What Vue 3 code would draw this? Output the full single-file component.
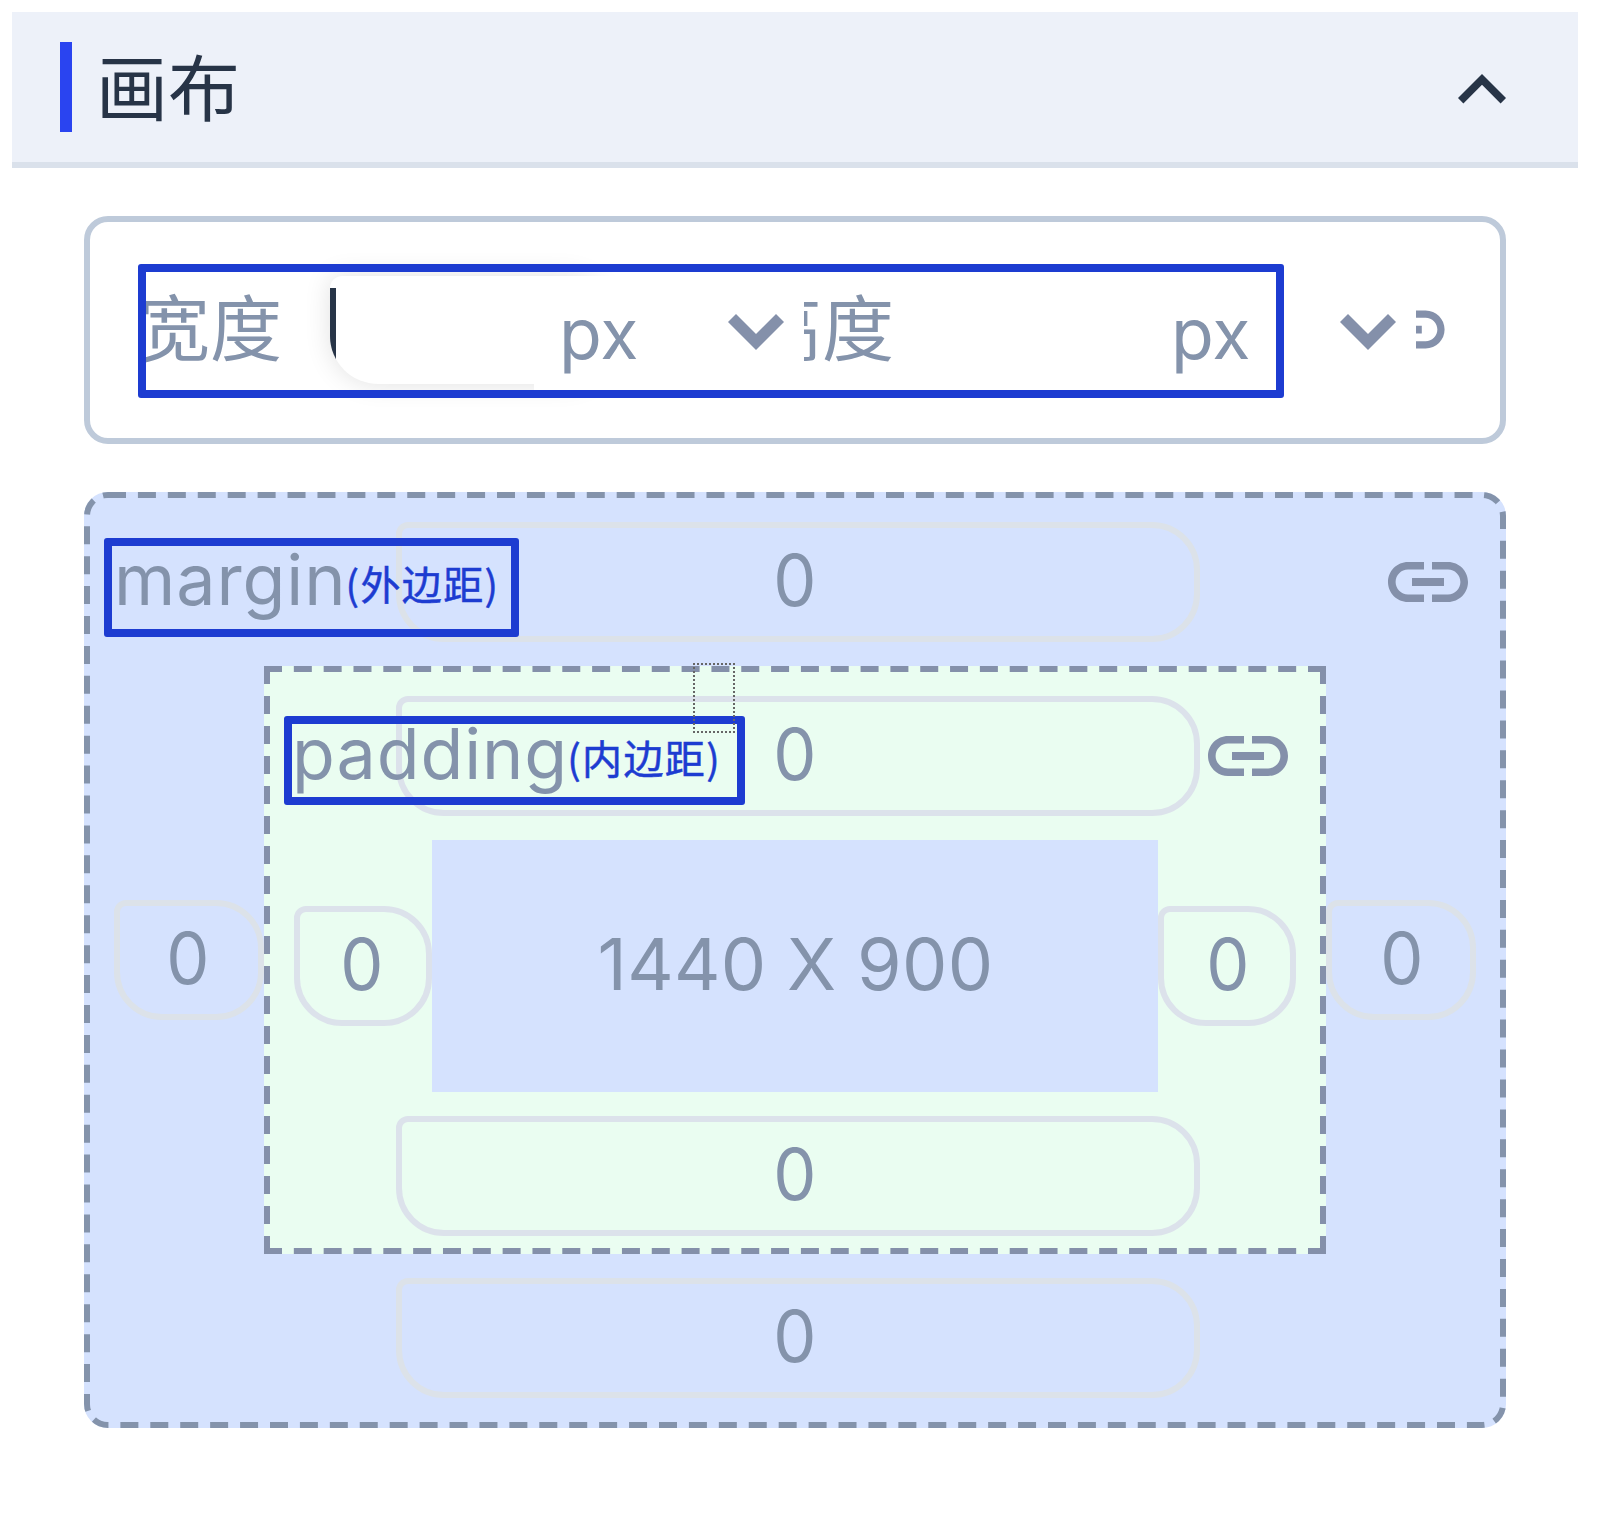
<script setup>
const groups = [
  { label: '宽度', focused: true },
  { label: '高度', focused: false },
]
const linkPath =
  'M3.9 12c0-1.71 1.39-3.1 3.1-3.1h4V7H7c-2.76 0-5 2.24-5 5s2.24 5 5 5h4v-1.9H7c-1.71 0-3.1-1.39-3.1-3.1zM8 13h8v-2H8v2zm9-6h-4v1.9h4c1.71 0 3.1 1.39 3.1 3.1s-1.39 3.1-3.1 3.1h-4V17h4c2.76 0 5-2.24 5-5s-2.24-5-5-5z'
</script>

<template>
  <div class="panel">
    <header class="head">
      <span class="mark"></span>
      <h1 class="title">画布</h1>
      <svg class="toggle" viewBox="0 0 24 24"><path d="M12 8l-6 6 1.35 1.35L12 10.7l4.65 4.65L18 14z" /></svg>
    </header>

    <section class="size">
      <div v-for="g in groups" :key="g.label" class="group">
        <span class="cjk">{{ g.label }}</span>
        <div class="field"><div v-if="g.focused" class="focus"></div></div>
        <div class="unit">
          <span class="px">px</span>
          <svg class="caret" viewBox="0 0 56 36"><path d="M0 8l8-8 20 20L48 0l8 8-28 28z" /></svg>
        </div>
      </div>
      <svg class="link small" viewBox="0 0 24 24"><path :d="linkPath" /></svg>
      <div class="note note-size"></div>
    </section>

    <section class="box margin">
      <div class="pill wide top"><span>0</span></div>
      <div class="middle">
        <div class="pill side outer-l"><span>0</span></div>
        <div class="box padding">
          <div class="pill wide"><span>0</span></div>
          <div class="inner">
            <div class="pill side"><span>0</span></div>
            <div class="content"><span>1440 X 900</span></div>
            <div class="pill side right"><span>0</span></div>
          </div>
          <div class="pill wide"><span>0</span></div>
          <svg class="link over" viewBox="0 0 24 24"><path :d="linkPath" /></svg>
          <div class="tag tag-padding"><span class="name">padding</span><span class="zh">(内边距)</span></div>
          <div class="note note-padding"></div>
          <div class="dots"></div>
        </div>
        <div class="pill side outer-r"><span>0</span></div>
      </div>
      <div class="pill wide"><span>0</span></div>
      <svg class="link over" viewBox="0 0 24 24"><path :d="linkPath" /></svg>
      <div class="tag tag-margin"><span class="name">margin</span><span class="zh">(外边距)</span></div>
      <div class="note note-margin"></div>
    </section>
  </div>
</template>

<style>
body { margin: 0; background: #fff; }
</style>

<style scoped>
.panel, .panel * { box-sizing: border-box; }
.panel {
  width: 1610px;
  height: 1522px;
  padding: 12px 32px 0 12px;
  overflow: hidden;
  background: #fff;
  font: 72px/96px Inter, "Noto Sans CJK SC", sans-serif;
  color: #8493ab;
}
.head {
  display: flex;
  align-items: flex-start;
  height: 156px;
  padding: 30px 48px 0;
  background: #edf1f9;
  border-bottom: 6px solid #dae1eb;
}
.mark { width: 12px; height: 90px; background: #2a44f0; }
.title {
  flex: 1;
  margin: -3px 0 0 24px;
  font: 400 72px/90px "Noto Sans CJK SC", sans-serif;
  color: #273447;
}
.toggle { width: 96px; height: 96px; fill: #273447; }

.size {
  position: relative;
  display: flex;
  align-items: center;
  width: 1422px;
  height: 228px;
  margin: 48px 0 0 72px;
  padding: 0 48px;
  border: 6px solid #becada;
  border-radius: 24px;
}
.group { display: flex; align-items: center; width: 612px; flex: none; height: 108px; }
.cjk { width: 192px; flex: none; margin-bottom: 12px; font-family: "Noto Sans CJK SC", sans-serif; }
.field { position: relative; width: 204px; height: 108px; flex: none; }
.focus {
  position: absolute;
  left: 0;
  top: 0;
  width: 282px;
  height: 108px;
  border-radius: 12px 48px 48px 48px;
  background: linear-gradient(#273447, #273447) 0 12px / 6px 96px no-repeat #fff;
  box-shadow: 0 0 27px rgba(0, 0, 0, 0.12);
}
.unit {
  position: relative;
  z-index: 1;
  display: flex;
  align-items: center;
  flex: none;
  width: 270px;
  height: 120px;
  margin: 12px -54px 0 0;
  padding: 0 20px 0 25px;
  justify-content: space-between;
  background: #fff;
}
.px { margin-bottom: 4px; font-size: 70px; }
.caret { width: 56px; height: 36px; margin-top: -8px; fill: #8490aa; }
.link { display: block; width: 96px; height: 96px; fill: #8490aa; }
.small { width: 91.2px; height: 91.2px; flex: none; margin-left: -.8px; }

.box { position: relative; border: 6px solid transparent; }
/* one-unit dashed outline drawn at the panel's 6x scale */
.box::before {
  content: "";
  position: absolute;
  box-sizing: border-box;
  left: -6px;
  top: -6px;
  border: 1px dashed #8493ab;
  transform: scale(6);
  transform-origin: 0 0;
}
.margin::before { width: 237px; height: 156px; border-radius: 4px; }
.padding::before { width: 177px; height: 98px; border-color: #8490aa; }
.margin {
  width: 1422px;
  height: 936px;
  margin: 48px 0 0 72px;
  padding-top: 24px;
  border-radius: 24px;
  background: #d5e2fe;
}
.pill {
  display: flex;
  align-items: center;
  justify-content: center;
  height: 120px;
  border: 6px solid #dce2e9;
  border-radius: 12px 48px 48px 48px;
}
.pill span { margin-top: -5px; transform: scaleX(.95); }
.padding .pill { border-color: #dce2eb; }
.wide { width: 804px; margin-left: 306px; padding-right: 6px; }
.side { width: 150px; flex: none; }
.middle { display: flex; align-items: flex-start; margin: 24px 0; padding-left: 24px; height: 588px; }
.outer-l, .outer-r { height: 120px; margin-top: 234px; }
.outer-l { padding-right: 2px; }
.outer-r { padding-left: 2px; }
.padding { width: 1062px; height: 588px; flex: none; padding-top: 24px; background: #eafdf1; }
.padding .wide { margin-left: 126px; }
.padding .side { width: 138px; padding-right: 2px; }
.padding .side.right { padding: 0 0 0 2px; }
.inner { display: flex; align-items: center; height: 252px; margin: 24px 0; padding-left: 24px; }
.content {
  display: flex;
  align-items: center;
  justify-content: center;
  width: 726px;
  height: 252px;
  flex: none;
  padding: 0 0 4px 1px;
  letter-spacing: .3px;
  background: #d5e2fe;
}
.over { position: absolute; right: 24px; top: 36px; }

.tag { position: absolute; display: flex; align-items: flex-start; white-space: nowrap; }
.name { font-size: 70px; letter-spacing: .9px; }
.zh {
  margin: 22px 0 0 -1px;
  font: 40px/58px "Noto Sans CJK SC", sans-serif;
  letter-spacing: 1.4px;
  color: #1d3cd1;
  -webkit-text-stroke: .5px #1d3cd1;
}
.tag-margin { left: 24px; top: 34px; }
.tag-padding { left: 22px; top: 34px; }

.note { position: absolute; z-index: 2; border: 8px solid #1d3cd1; border-radius: 3px; }
.note-size { left: 48px; top: 42px; width: 1146px; height: 134px; }
.note-margin { left: 14px; top: 40px; width: 415px; height: 99px; }
.note-padding { left: 14px; top: 44px; width: 461px; height: 89px; }
.dots { position: absolute; left: 423px; top: -9px; width: 42px; height: 70px; border: 2px dotted #666; z-index: 3; }
</style>
